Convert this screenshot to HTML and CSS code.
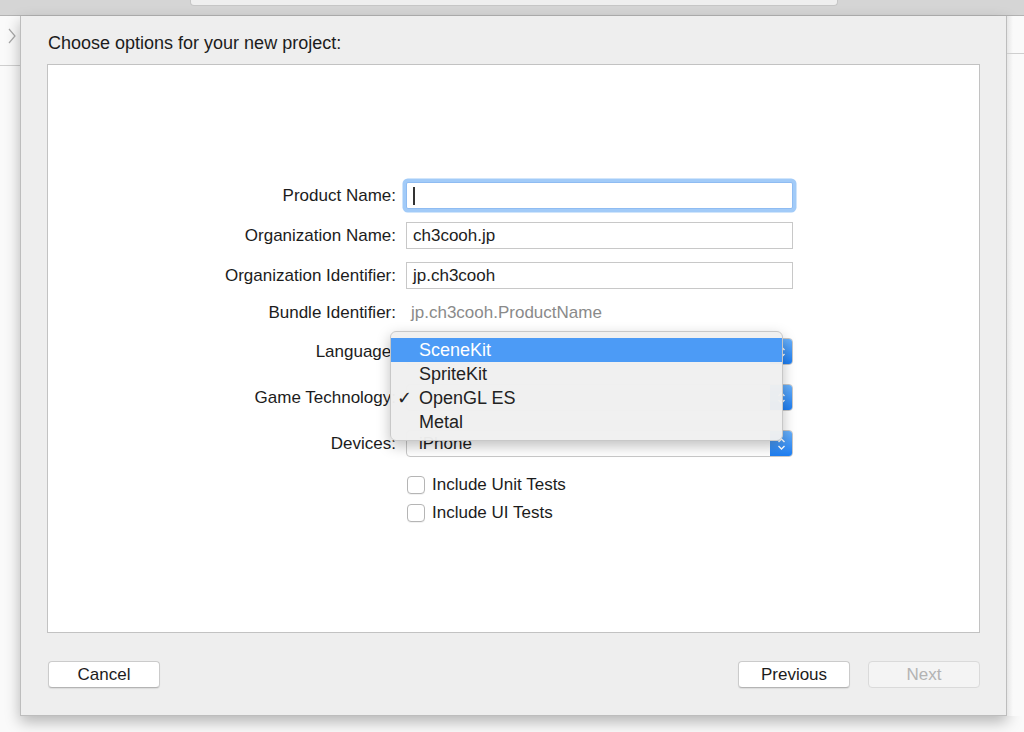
FILE: index.html
```html
<!DOCTYPE html>
<html lang="en">
  <head>
    <meta charset="UTF-8" />
    <meta name="viewport" content="width=device-width, initial-scale=1.0" />
    <title>New Project</title>

    <link rel="stylesheet" href="styles.css">
  </head>
  <body>
    <div class="toolbar">
      <div class="toolbar-tab"></div>
    </div>

    <div class="stage">
      <div class="gutter gutter-left">
        <div class="gutter-bar">
          <svg class="chevron" width="10" height="16" viewBox="0 0 10 16">
            <path d="M2 1 L8 8 L2 15" fill="none" stroke="#a8a8a8" stroke-width="1.2" />
          </svg>
        </div>
      </div>

      <div class="sheet">
        <div class="sheet-title">Choose options for your new project:</div>

        <div class="options-box">
          <form class="options-form">
            <div class="form-row row-product">
              <label class="form-label" for="productName">Product Name:</label>
              <div class="text-field focused" id="productName"><span class="caret"></span></div>
            </div>
            <div class="form-row row-org">
              <label class="form-label">Organization Name:</label>
              <div class="text-field">ch3cooh.jp</div>
            </div>
            <div class="form-row row-orgid">
              <label class="form-label">Organization Identifier:</label>
              <div class="text-field">jp.ch3cooh</div>
            </div>
            <div class="form-row row-bundle">
              <label class="form-label">Bundle Identifier:</label>
              <div class="static-value">jp.ch3cooh.ProductName</div>
            </div>
            <div class="form-row row-language">
              <label class="form-label">Language:</label>
              <div class="popup">
                <span class="popup-text"></span>
                <span class="popup-arrows">
                  <svg width="9" height="14" viewBox="0 0 9 14">
                    <path d="M1.5 5 L4.5 2 L7.5 5 M1.5 9 L4.5 12 L7.5 9" fill="none" stroke="#fff" stroke-width="1.4" />
                  </svg>
                </span>
              </div>
            </div>
            <div class="form-row row-game">
              <label class="form-label">Game Technology:</label>
              <div class="popup">
                <span class="popup-text"></span>
                <span class="popup-arrows">
                  <svg width="9" height="14" viewBox="0 0 9 14">
                    <path d="M1.5 5 L4.5 2 L7.5 5 M1.5 9 L4.5 12 L7.5 9" fill="none" stroke="#fff" stroke-width="1.4" />
                  </svg>
                </span>
              </div>
            </div>
            <div class="form-row row-devices">
              <label class="form-label">Devices:</label>
              <div class="popup">
                <span class="popup-text">iPhone</span>
                <span class="popup-arrows">
                  <svg width="9" height="14" viewBox="0 0 9 14">
                    <path d="M1.5 5 L4.5 2 L7.5 5 M1.5 9 L4.5 12 L7.5 9" fill="none" stroke="#fff" stroke-width="1.4" />
                  </svg>
                </span>
              </div>
            </div>
            <div class="form-row row-check1">
              <span></span>
              <div class="check-item"><span class="checkbox"></span>Include Unit Tests</div>
            </div>
            <div class="form-row row-check2">
              <span></span>
              <div class="check-item"><span class="checkbox"></span>Include UI Tests</div>
            </div>
          </form>

          <!-- open popup menu for Game Technology -->
          <div class="menu">
            <div class="menu-item selected">SceneKit</div>
            <div class="menu-item">SpriteKit</div>
            <div class="menu-item"><span class="check">✓</span>OpenGL ES</div>
            <div class="menu-item">Metal</div>
          </div>
        </div>

        <div class="sheet-buttons">
          <button class="btn" type="button">Cancel</button>
          <div class="btn-group">
            <button class="btn" type="button">Previous</button>
            <button class="btn disabled" type="button">Next</button>
          </div>
        </div>
      </div>

      <div class="gutter gutter-right">
        <div class="gutter-bar"></div>
      </div>
    </div>
  </body>
</html>
```

FILE: styles.css
```css
body {
  margin: 0;
  font-family: "Liberation Sans", Arial, sans-serif;
  background-color: #fafafa;
  color: #1c1c1c;
  height: 732px;
  overflow: hidden;
}

.toolbar {
  height: 15px;
  background-color: #d5d5d5;
  border-bottom: 1px solid #b3b3b3;
}
.toolbar-tab {
  margin-left: 190px;
  width: 646px;
  height: 5px;
  background-color: #efefef;
  border: 1px solid #c6c6c6;
  border-top: none;
  border-radius: 0 0 4px 4px;
}

.stage {
  display: flex;
}

.gutter-left {
  width: 20px;
}
.gutter-right {
  flex: 1;
  background: linear-gradient(to right, #e6e6e6, #fafafa 6px);
}
.gutter-bar {
  height: 37px;
  border-bottom: 1px solid #cfcfcf;
}
.chevron {
  display: block;
  margin: 12px 0 0 7px;
}

.sheet {
  width: 987px;
  height: 700px;
  box-sizing: border-box;
  background-color: #eeeeee;
  border: 1px solid #bdbdbd;
  border-top: none;
  box-shadow: 0 6px 14px rgba(0, 0, 0, 0.28);
  padding: 0 26px;
  display: flex;
  flex-direction: column;
}

.sheet-title {
  font-size: 18px;
  line-height: 22px;
  margin-top: 16px;
  margin-left: 1px;
}

.options-box {
  position: relative;
  margin-top: 10px;
  height: 569px;
  box-sizing: border-box;
  width: 933px;
  background-color: white;
  border: 1px solid #c2c2c2;
}

.options-form {
  display: flex;
  flex-direction: column;
  padding-top: 117px;
}

.form-row {
  display: grid;
  grid-template-columns: 348px 387px;
  column-gap: 10px;
  align-items: center;
  height: 27px;
  font-size: 17px;
}
.row-org,
.row-orgid { margin-top: 13px; }
.row-bundle { margin-top: 10px; }
.row-language { margin-top: 12px; }
.row-game,
.row-devices { margin-top: 19px; }
.row-check1 { margin-top: 18px; height: 18px; }
.row-check2 { margin-top: 10px; height: 18px; }

.form-label {
  text-align: right;
  white-space: nowrap;
}

.text-field {
  height: 27px;
  box-sizing: border-box;
  border: 1px solid #c8c8c8;
  background-color: white;
  padding: 0 6px;
  display: flex;
  align-items: center;
}
.text-field.focused {
  border-color: #8fbcf2;
  box-shadow: 0 0 0 3.5px #a2cbf8;
  border-radius: 2px;
}
.caret {
  width: 2px;
  height: 18px;
  background-color: #333;
}

.static-value {
  color: #8a8a8a;
  padding-left: 5px;
}

.popup {
  height: 27px;
  box-sizing: border-box;
  border: 1px solid #c8c8c8;
  border-radius: 4px;
  background-color: white;
  display: flex;
  align-items: center;
  justify-content: space-between;
  overflow: hidden;
}
.popup-text {
  padding-left: 12px;
}
.popup-arrows {
  width: 23px;
  height: 27px;
  margin-right: -1px;
  background: linear-gradient(#6bb2fb, #1b7cf1);
  display: flex;
  align-items: center;
  justify-content: center;
}

.check-item {
  display: flex;
  align-items: center;
  gap: 7px;
  padding-left: 1px;
}
.checkbox {
  width: 18px;
  height: 18px;
  box-sizing: border-box;
  border: 1px solid #b5b5b5;
  border-radius: 4px;
  background-color: white;
  box-shadow: 0 1px 0 rgba(0, 0, 0, 0.05);
}

.menu {
  position: absolute;
  left: 342px;
  top: 266px;
  width: 391px;
  padding: 6px 0;
  background-color: rgba(240, 240, 240, 0.97);
  border: 1px solid #c8c8c8;
  border-radius: 6px;
  box-shadow: 0 5px 14px rgba(0, 0, 0, 0.25);
  font-size: 18px;
}
.menu-item {
  position: relative;
  height: 24px;
  line-height: 24px;
  padding-left: 28px;
  color: #222;
}
.menu-item.selected {
  background-color: #4c9bf6;
  color: white;
}
.check {
  position: absolute;
  left: 6px;
  font-size: 18px;
  font-family: "DejaVu Sans", sans-serif;
}

.sheet-buttons {
  margin-top: 28px;
  display: flex;
  justify-content: space-between;
  margin-left: 1px;
}
.btn-group {
  display: flex;
  gap: 18px;
}
.btn {
  width: 112px;
  height: 27px;
  font-family: "Liberation Sans", Arial, sans-serif;
  font-size: 17px;
  color: #1c1c1c;
  background-color: white;
  border: 1px solid #cbcbcb;
  border-bottom-color: #b4b4b4;
  border-radius: 4px;
  box-shadow: 0 1px 1px rgba(0, 0, 0, 0.08);
  padding: 0;
}
.btn.disabled {
  color: #b3b3b3;
  background-color: #f4f4f4;
  border-color: #dadada;
  box-shadow: none;
}
```
